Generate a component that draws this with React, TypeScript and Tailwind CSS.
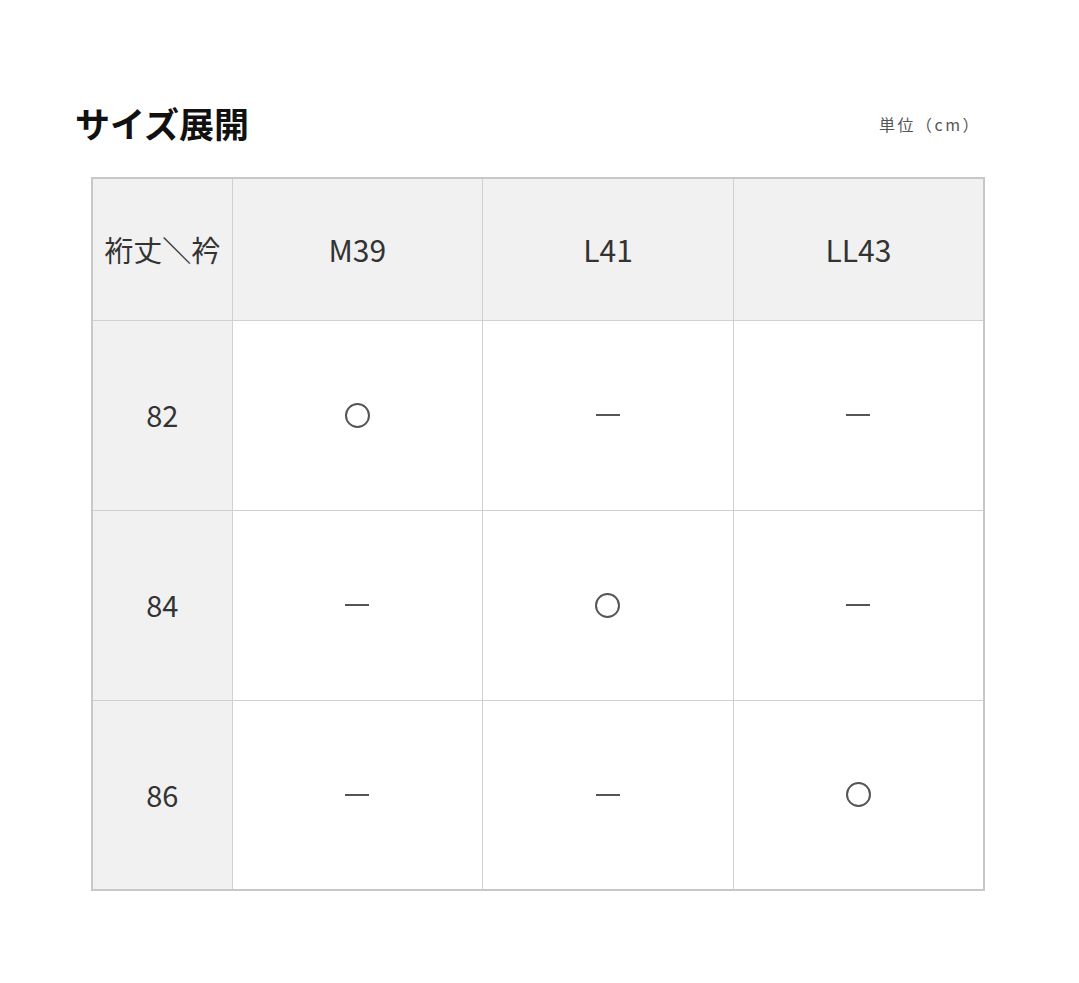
const cols = ['M39', 'L41', 'LL43'];

const rows = [
  { length: '82', marks: [true, false, false] },
  { length: '84', marks: [false, true, false] },
  { length: '86', marks: [false, false, true] },
];

const font = { fontFamily: '"Noto Sans CJK JP", "Liberation Sans", sans-serif' };

function Mark({ on }: { on: boolean }) {
  if (on) return <span className="block w-[25px] h-[25px] rounded-full border-2 border-[#555]" />;
  return <span className="block w-[24px] h-[2px] bg-[#555]" />;
}

export default function App() {
  return (
    <div className="min-h-screen bg-white text-[#333]" style={font}>
      <div className="pt-[99px] pl-[75px] pr-[108px]">
        <div className="flex items-end justify-between">
          <h2 className="text-[35px] leading-[48px] font-bold text-[#111]">サイズ展開</h2>
          <p className="text-[16px] text-[#555] mb-[11px] tracking-[2.5px] mr-[-10px]">単位（cm）</p>
        </div>

        <table className="mt-[30px] ml-[16px] w-[894px] border-collapse border-2 border-[#c8c8c8] table-fixed">
          <colgroup>
            <col className="w-[140px]" />
            <col />
            <col />
            <col />
          </colgroup>
          <thead>
            <tr className="h-[142px] bg-[#f1f1f1]">
              <th className="border border-[#d0d0d0] font-normal text-[29px] whitespace-nowrap">裄丈＼衿</th>
              {cols.map((c) => (
                <th key={c} className="border border-[#d0d0d0] font-normal text-[30px]">{c}</th>
              ))}
            </tr>
          </thead>
          <tbody>
            {rows.map((r) => (
              <tr key={r.length} className="h-[190px]">
                <td className="border border-[#d0d0d0] bg-[#f1f1f1] text-center text-[29px]">{r.length}</td>
                {r.marks.map((m, i) => (
                  <td key={i} className="border border-[#d0d0d0]">
                    <div className="flex items-center justify-center">
                      <Mark on={m} />
                    </div>
                  </td>
                ))}
              </tr>
            ))}
          </tbody>
        </table>
      </div>
    </div>
  );
}
